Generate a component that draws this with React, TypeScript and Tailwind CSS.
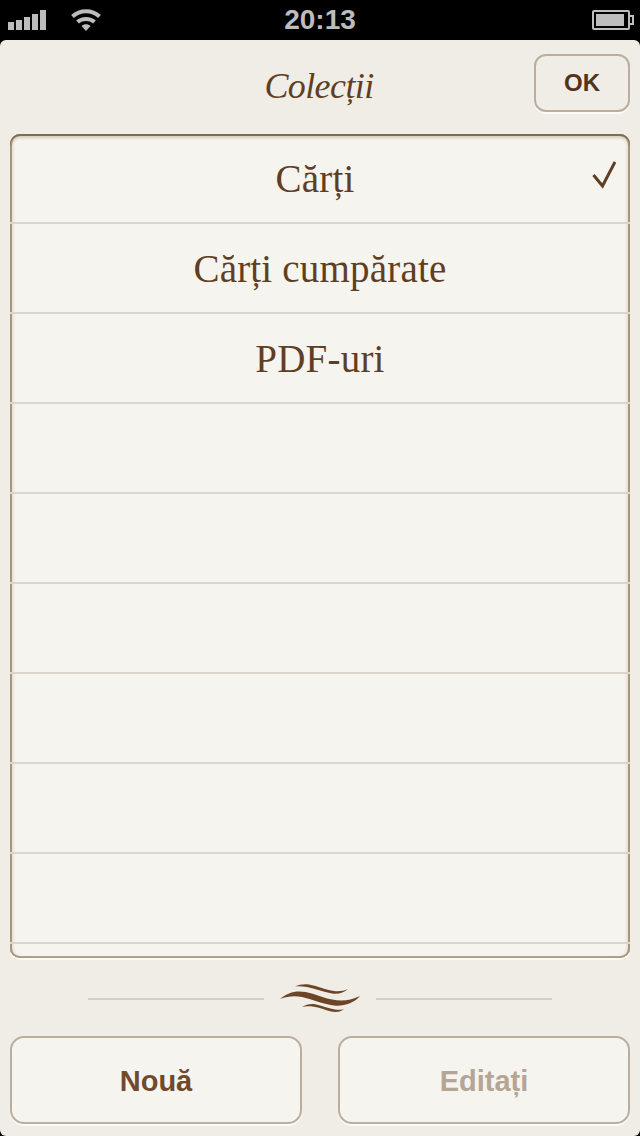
const rows = ['Cărți', 'Cărți cumpărate', 'PDF-uri', '', '', '', '', '', '']

function StatusBar() {
  return (
    <div className="h-10 bg-black flex items-center justify-between pl-2 pr-[6px] relative shrink-0">
      <div className="flex items-center gap-[25px]">
        {/* signal */}
        <div className="flex items-end gap-[2px] h-5">
          <div className="w-[6px] h-2 bg-[#bdbdbd]" />
          <div className="w-[6px] h-[10px] bg-[#bdbdbd]" />
          <div className="w-[6px] h-[13px] bg-[#bdbdbd]" />
          <div className="w-[6px] h-4 bg-[#bdbdbd]" />
          <div className="w-[6px] h-5 bg-[#bdbdbd]" />
        </div>
        <svg width="30" height="24" viewBox="0 0 30 24" fill="none">
          <path d="M1.5 8.5 C9 1.5 21 1.5 28.5 8.5" stroke="#bdbdbd" strokeWidth="4" />
          <path d="M6.5 14 C11 10 19 10 23.5 14" stroke="#bdbdbd" strokeWidth="4" />
          <path d="M10.5 18 C13 15.5 17 15.5 19.5 18 L15 23 Z" fill="#bdbdbd" />
        </svg>
      </div>
      <span className="absolute left-0 right-0 text-center text-[28px] leading-10 font-bold text-[#bdbdbd] font-['Liberation_Sans',sans-serif]">
        20:13
      </span>
      <div className="flex items-center">
        <div className="w-[38px] h-5 border-2 border-[#bdbdbd] rounded-[2px] p-[2px]">
          <div className="h-full w-[28px] bg-[#bdbdbd]" />
        </div>
        <div className="w-[4px] h-[10px] border-2 border-l-0 border-[#bdbdbd]" />
      </div>
    </div>
  )
}

function Ornament() {
  return (
    <svg width="80" height="34" viewBox="0 0 80 34" fill="none" className="mx-4">
      <path d="M0 17 C6 12 12 9.5 19 9.5 C28 9.5 36 13 44 15.5 C54 18.5 66 21 80 14 C74 21 64 24.5 54 23.5 C42 22 32 17 22 15 C14 13.5 7 14.5 0 17 Z" fill="#6b4526" />
      <path d="M15 4.5 C19 2.5 24 2 29 2.5 C38 4 46 8 54 9 C59 9.5 64 9 68 7 C64 11 58 12.5 52 11.5 C43 10 35 6.5 27 5 C22 4.2 18 4 15 4.5 Z" fill="#6b4526" />
      <path d="M22 25 C26 22.5 31 21.5 36 22.5 C43 24 49 26.5 55 27.5 C58 28 61 28 64 27 C61 30 56 30.5 51 29.5 C45 28 39 25.5 34 24.8 C29 24.2 25 24.2 22 25 Z" fill="#6b4526" />
    </svg>
  )
}

export default function App() {
  return (
    <div className="w-[640px] h-[1136px] bg-black flex flex-col overflow-hidden font-['Liberation_Sans',sans-serif]">
      <StatusBar />
      <div className="flex-1 bg-[#f0ede6] rounded-[6px] flex flex-col px-[10px]">
        {/* header */}
        <div className="h-[94px] shrink-0 relative flex items-start justify-end pt-[14px]">
          <h1 className="absolute left-0 right-0 top-[21px] pr-[2px] text-center text-[36px] leading-[50px] tracking-[-0.6px] italic text-[#5f3f24] font-['Liberation_Serif',serif]">
            Colecții
          </h1>
          <button className="relative w-[96px] h-[58px] rounded-[12px] border-2 border-[#bcae9e] shadow-[0_2px_0_#fbfaf6] text-[24px] font-bold text-[#52341c]">
            OK
          </button>
        </div>

        {/* list */}
        <div className="h-[824px] shrink-0 bg-[#f6f4ef] rounded-[10px] shadow-[inset_0_2px_0_#806a50,inset_0_5px_3px_-1px_rgba(128,106,80,0.3),inset_2px_0_0_#a8977f,inset_-2px_0_0_#a8977f,inset_4px_0_3px_-1px_rgba(128,106,80,0.2),inset_-4px_0_3px_-1px_rgba(128,106,80,0.2),inset_0_-2px_0_#b0a391,0_2px_0_#fbfaf6] overflow-hidden">
          {rows.map((label, i) => (
            <div
              key={i}
              className={`h-[90px] relative flex items-center justify-center border-b-2 border-[#dbd5cd] pt-[2px] text-[39px] tracking-[0.2px] text-[#5f3f24] font-['Liberation_Serif',serif] ${i === 0 ? 'pr-[10px]' : ''}`}
            >
              {label}
              {i === 0 && (
                <svg width="24" height="28" viewBox="0 0 24 28" fill="none" className="absolute right-[14px] top-[27px]">
                  <path d="M1.5 14 L10.5 25 L23 1" stroke="#5f3f24" strokeWidth="3" />
                </svg>
              )}
            </div>
          ))}
        </div>

        {/* divider */}
        <div className="h-[78px] shrink-0 flex items-center justify-center pt-[4px]">
          <div className="w-[176px] h-[2px] bg-[#d5cfc7]" />
          <Ornament />
          <div className="w-[176px] h-[2px] bg-[#d5cfc7]" />
        </div>

        {/* actions */}
        <div className="flex justify-between">
          <button className="w-[292px] h-[88px] rounded-[14px] border-2 border-[#bcae9e] bg-[#f6f4ef] shadow-[0_2px_0_#fbfaf6] pt-[3px] text-[29px] font-bold text-[#6f4a2b]">
            Nouă
          </button>
          <button className="w-[292px] h-[88px] rounded-[14px] border-2 border-[#bcae9e] bg-[#f6f4ef] shadow-[0_2px_0_#fbfaf6] pt-[3px] text-[29px] font-bold text-[#b5a594]">
            Editați
          </button>
        </div>
      </div>
    </div>
  )
}
